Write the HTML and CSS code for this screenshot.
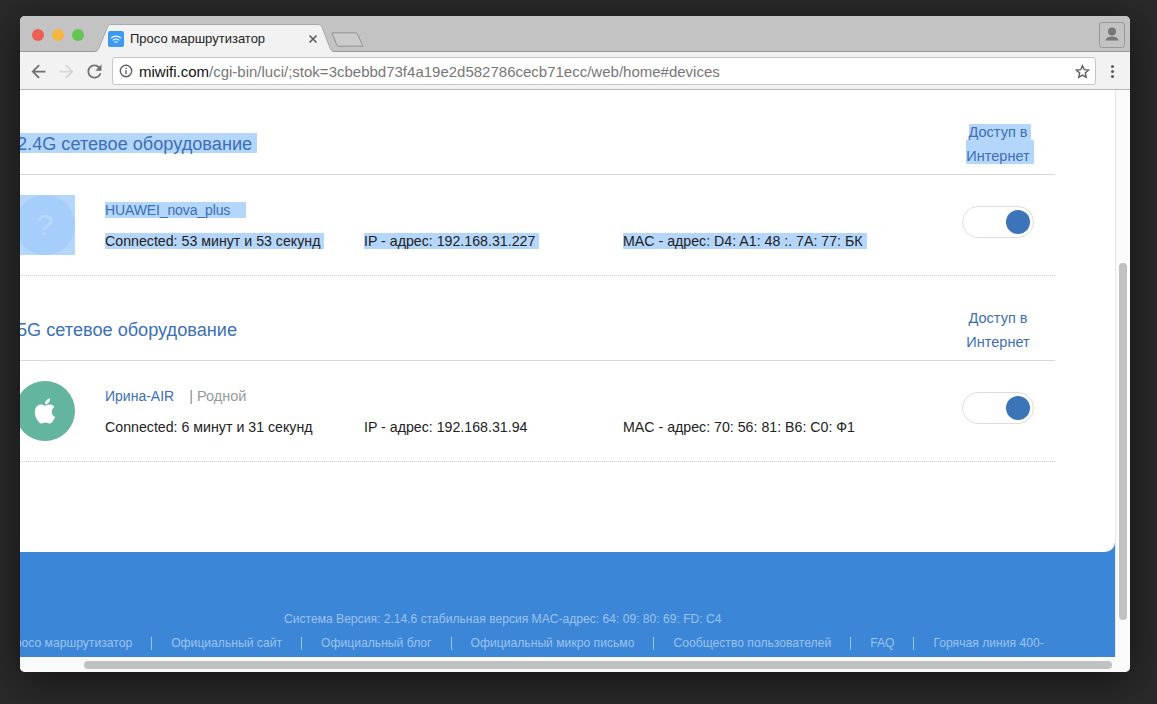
FILE: index.html
```html
<!DOCTYPE html>
<html lang="ru">
<head>
<meta charset="utf-8">
<title>Просо маршрутизатор</title>
<link rel="stylesheet" href="styles.css">
</head>
<body>
<div class="window">
  <div class="tabstrip">
    <div class="lights"><i class="light red"></i><i class="light yellow"></i><i class="light green"></i></div>
    <div class="tab">
      <svg class="tab-shape" width="244" height="29" viewBox="0 0 244 29"><path d="M0 28.5C5 28.5 6 26 7 24L15.5 3C16.5 1 17.5 .5 20 .5H225C228 .5 229 1 230 3L238 24C239 26 240 28.5 244 28.5Z" fill="#f2f2f2" stroke="#a8a8a8"/><path d="M0 29H244V28H0Z" fill="#f2f2f2"/></svg>
      <span class="favicon"><svg width="16" height="16" viewBox="0 0 16 16"><path d="M3 7.200a7 7 0 0 1 10 0M4.900 9.300a4.300 4.300 0 0 1 6.200 0M6.600 11.400a2 2 0 0 1 2.800 0" fill="none" stroke="#fff" stroke-width="1.100"/></svg></span>
      <span class="tab-title">Просо маршрутизатор</span>
      <svg class="tab-close" width="10" height="10" viewBox="0 0 10 10"><path d="M1.500 1.500l7 7M8.500 1.500l-7 7" stroke="#5c5c5c" stroke-width="1.600"/></svg>
    </div>
    <svg class="newtab" width="33" height="16" viewBox="0 0 33 16"><path d="M1 .8H24C25.500 .8 26 1.200 26.700 2.500L32 14.200H8C6.800 14.200 6.200 13.800 5.700 12.800Z" fill="#cbcbcb" stroke="#929292"/></svg>
    <div class="profile"><svg width="18" height="16" viewBox="0 0 18 16"><circle cx="9" cy="4.600" r="4" fill="#777"/><path d="M2.500 13.500C3 10.500 6 9.500 9 9.500S15 10.500 15.500 13.500Z" fill="#777"/></svg></div>
  </div>
  <div class="toolbar">
    <div class="navbtn"><svg width="21" height="21" viewBox="0 0 24 24"><path d="M20 11H7.830l5.590-5.590L12 4l-8 8 8 8 1.410-1.410L7.830 13H20z" fill="#6e6e6e"/></svg></div>
    <div class="navbtn"><svg width="21" height="21" viewBox="0 0 24 24"><path d="M4 11h12.170l-5.590-5.590L12 4l8 8-8 8-1.410-1.410L16.170 13H4z" fill="#d6d6d6"/></svg></div>
    <div class="navbtn"><svg width="21" height="21" viewBox="0 0 24 24"><path d="M17.650 6.350A7.958 7.958 0 0 0 12 4c-4.420 0-7.990 3.580-7.990 8s3.570 8 7.990 8c3.730 0 6.840-2.550 7.730-6h-2.080A5.990 5.990 0 0 1 12 18c-3.310 0-6-2.690-6-6s2.690-6 6-6c1.660 0 3.140.690 4.220 1.780L13 11h7V4z" fill="#6e6e6e"/></svg></div>
    <div class="omnibox">
      <svg class="info-icon" width="14" height="14" viewBox="0 0 14 14"><circle cx="7" cy="7" r="5.700" fill="none" stroke="#5f5f5f" stroke-width="1.400"/><path d="M6.300 6.200h1.400v4H6.300zM6.300 3.700h1.400v1.400H6.300z" fill="#5f5f5f"/></svg>
      <span class="url"><span class="host">miwifi.com</span>/cgi-bin/luci/;stok=3cbebbd73f4a19e2d582786cecb71ecc/web/home#devices</span>
      <svg class="star" width="15" height="15" viewBox="0 0 24 24"><path d="M12 2.800l2.800 6.300 6.900.7-5.200 4.600 1.500 6.800-6-3.500-6 3.500 1.500-6.800-5.200-4.600 6.900-.7z" fill="none" stroke="#5f5f5f" stroke-width="2.200"/></svg>
    </div>
    <div class="menu"><i></i><i></i><i></i></div>
  </div>
  <div class="viewport">
    <div class="page">
      <div class="panel">
        <section class="section">
          <div class="section-head">
            <h2 class="section-title"><span class="sel title-mark">2.4G сетевое оборудование</span></h2>
            <div class="access"><span class="sel access-a">Доступ в</span><span class="sel access-b">Интернет</span></div>
          </div>
          <div class="device">
            <div class="avatar-cell sel"><div class="avatar unknown">?</div></div>
            <div class="details">
              <div class="name-line"><span class="sel name-mark name-tight">HUAWEI_nova_plus</span></div>
              <div class="stats">
                <div class="stat"><span class="sel stat-mark">Connected: 53 минут и 53 секунд</span></div>
                <div class="stat"><span class="sel stat-mark">IP - адрес: 192.168.31.227</span></div>
                <div class="stat"><span class="sel stat-mark">MAC - адрес: D4: A1: 48 :. 7A: 77: БК</span></div>
              </div>
            </div>
            <div class="toggle"><i></i></div>
          </div>
        </section>
        <section class="section">
          <div class="section-head">
            <h2 class="section-title"><span class="title-mark">5G сетевое оборудование</span></h2>
            <div class="access"><span class="access-a">Доступ в</span><span class="access-b">Интернет</span></div>
          </div>
          <div class="device">
            <div class="avatar-cell"><div class="avatar apple"><svg width="30" height="30" viewBox="0 0 24 24"><path d="M18.710 19.500c-.830 1.240-1.710 2.450-3.050 2.470-1.340.030-1.770-.790-3.290-.790-1.530 0-2 .770-3.270.820-1.310.050-2.300-1.320-3.140-2.530C4.250 17 2.940 12.450 4.700 9.390c.870-1.520 2.430-2.480 4.120-2.510 1.280-.020 2.500.870 3.290.870.780 0 2.260-1.070 3.800-.910.650.030 2.470.260 3.640 1.980-.090.060-2.170 1.280-2.150 3.810.030 3.020 2.650 4.030 2.680 4.040-.030.070-.420 1.440-1.380 2.830M13 3.500c.730-.830 1.940-1.460 2.940-1.500.130 1.170-.340 2.350-1.040 3.190-.690.850-1.830 1.510-2.950 1.420-.150-1.150.410-2.350 1.050-3.110z" fill="#fff"/></svg></div></div>
            <div class="details">
              <div class="name-line"><span class="name-mark">Ирина-AIR</span><span class="relation"><b>|</b> Родной</span></div>
              <div class="stats">
                <div class="stat"><span class="stat-mark">Connected: 6 минут и 31 секунд</span></div>
                <div class="stat"><span class="stat-mark">IP - адрес: 192.168.31.94</span></div>
                <div class="stat"><span class="stat-mark">MAC - адрес: 70: 56: 81: B6: C0: Ф1</span></div>
              </div>
            </div>
            <div class="toggle"><i></i></div>
          </div>
        </section>
      </div>
      <footer class="footer">
        <div class="version">Система Версия: 2.14.6 стабильная версия MAC-адрес: 64: 09: 80: 69: FD: C4</div>
        <div class="links">
          <span>Просо маршрутизатор</span><i></i>
          <span>Официальный сайт</span><i></i>
          <span>Официальный блог</span><i></i>
          <span>Официальный микро письмо</span><i></i>
          <span>Сообщество пользователей</span><i></i>
          <span>FAQ</span><i></i>
          <span>Горячая линия 400-</span>
        </div>
      </footer>
    </div>
    <div class="vbar"><i></i></div>
    <div class="hbar"><i></i></div>
    <div class="corner"></div>
  </div>
</div>
</body>
</html>
```
FILE: styles.css
```css
* { box-sizing: border-box; }
html, body { margin: 0; height: 704px; overflow: hidden; }
body {
  padding: 16px 27px 32px 20px;
  background: #2a2a2a;
  font-family: "Liberation Sans", Arial, sans-serif;
}
i { display: block; font-style: normal; }
.window {
  width: 1110px;
  height: 656px;
  border-radius: 5px;
  overflow: hidden;
  display: flex;
  flex-direction: column;
  background: #fff;
  box-shadow: 0 8px 40px rgba(0, 0, 0, .55);
}

/* tab strip */
.tabstrip {
  height: 36px;
  flex: none;
  display: flex;
  align-items: flex-start;
  background: #c3c3c3;
  border-bottom: 1px solid #999;
  position: relative;
}
.lights { display: flex; gap: 8px; padding: 13px 0 0 12px; }
.light { width: 12px; height: 12px; border-radius: 50%; }
.red { background: #ec5d56; }
.yellow { background: #f5b63f; }
.green { background: #62c554; }
.tab {
  position: relative;
  width: 244px;
  height: 28px;
  margin: 8px 0 0 8px;
  padding: 7px 18px 0 16px;
  display: flex;
  align-items: flex-start;
  color: #222;
}
.tab-shape { position: absolute; left: 0; top: 0; }
.favicon {
  position: relative;
  width: 16px;
  height: 16px;
  border-radius: 2px;
  background: #3c9af5;
  display: block;
}
.favicon svg { display: block; }
.tab-title { position: relative; margin-left: 6px; line-height: 16px; font-size: 13px; white-space: nowrap; }
.tab-close { position: relative; margin: 3px 0 0 auto; }
.newtab { margin: 16px 0 0 -5px; }
.profile {
  margin: 6px 5px 0 auto;
  width: 26px;
  height: 26px;
  border: 1px solid #999;
  border-radius: 3px;
  display: flex;
  align-items: center;
  justify-content: center;
}

/* toolbar */
.toolbar {
  height: 38px;
  flex: none;
  display: flex;
  align-items: center;
  padding: 1px 2px 0 4px;
  background: #f2f2f2;
  border-bottom: 1px solid #b4b4b4;
}
.navbtn { width: 28px; height: 28px; display: flex; align-items: center; justify-content: center; }
.omnibox {
  flex: 1;
  height: 28px;
  margin-left: 4px;
  padding: 0 5px 0 6px;
  display: flex;
  align-items: center;
  background: #fff;
  border: 1px solid #c6c6c6;
  border-radius: 3px;
}
.info-icon { flex: none; }
.url { margin-left: 6px; font-size: 15px; color: #777; white-space: nowrap; }
.host { color: #111; }
.star { margin-left: auto; }
.menu { width: 32px; display: flex; flex-direction: column; align-items: center; gap: 2px; }
.menu i { width: 3px; height: 3px; border-radius: 50%; background: #5a5a5a; }

/* viewport */
.viewport {
  flex: 1;
  min-height: 0;
  display: grid;
  grid-template-columns: 1095px 15px;
  grid-template-rows: 567px 15px;
}
.page { overflow: hidden; background: #3b86d6; }
.panel {
  height: 462px;
  padding-top: 30px;
  background: #fff;
  border-bottom-right-radius: 10px;
}
.section { width: 1045px; margin: 0 0 30px -10px; }
.section-head {
  height: 55px;
  padding: 4px 15px 2px 7px;
  display: flex;
  justify-content: space-between;
  align-items: flex-start;
  border-bottom: 1px solid #d8d8d8;
}
.section-title {
  margin: 9px 0 0;
  font-size: 18.150px;
  font-weight: 400;
  line-height: 17px;
  color: #3b6fb6;
}
.title-mark { display: block; padding: 3px 5px 0 0; }
.access {
  width: 80px;
  display: flex;
  flex-direction: column;
  align-items: center;
  font-size: 14.500px;
  color: #3b6fb6;
}
.access-a { line-height: 16px; padding: 0 4px 0 0; }
.access-b { line-height: 16px; padding: 8px 4px 0 0; }
.sel { background: #b5d6fb; }
.device {
  height: 101px;
  padding: 20px 21px 20px 0;
  display: flex;
  align-items: flex-start;
  border-bottom: 1px dotted #c8c8c8;
}
.avatar-cell { width: 65px; height: 60px; padding-left: 5px; flex: none; }
.avatar {
  width: 60px;
  height: 60px;
  border-radius: 50%;
  display: flex;
  align-items: center;
  justify-content: center;
}
.unknown { background: #a6cefa; color: #b9d9fc; font-size: 30px; }
.apple { background: #64b5a0; }
.details { flex: 1; margin-left: 30px; padding-top: 7px; font-size: 14.200px; line-height: 16px; color: #222; }
.name-line { height: 16px; font-size: 14px; color: #3b6fb6; }
.name-mark { display: inline-block; padding-right: 16px; }
.name-tight { letter-spacing: -.12px; }
.relation { margin-left: -1px; color: #999; font-size: 14.500px; }
.relation b { font-weight: 400; color: #7f9488; }
.stats { display: grid; grid-template-columns: 259px 259px 1fr; margin-top: 15px; }
.stat-mark { display: inline-block; padding-right: 4px; }
.toggle {
  flex: none;
  width: 72px;
  height: 32px;
  margin-top: 11px;
  padding: 3px 3px 3px 0;
  display: flex;
  justify-content: flex-end;
  border: 1px solid #ddd;
  border-radius: 16px;
  background: #fff;
}
.toggle i { width: 24px; height: 24px; border-radius: 50%; background: #3b74b8; }

/* footer */
.footer { height: 105px; padding-top: 55px; line-height: 24px; color: #9cc2ee; white-space: nowrap; }
.version { padding-left: 264px; font-size: 12.100px; }
.links { display: flex; align-items: center; gap: 19px; margin-left: -14px; font-size: 12.150px; }
.links i { width: 1px; height: 13px; background: #9cc2ee; }

/* scrollbars */
.vbar { background: #fafafa; border-left: 1px solid #e8e8e8; padding: 173px 3px 0 3px; }
.vbar i { width: 8px; height: 357px; border-radius: 4px; background: #c1c1c1; }
.hbar { background: #fafafa; border-top: 1px solid #fff; padding: 3px 0 0 64px; }
.hbar i { width: 1028px; height: 8px; border-radius: 4px; background: #c1c1c1; }
.corner { background: #fafafa; }
```
